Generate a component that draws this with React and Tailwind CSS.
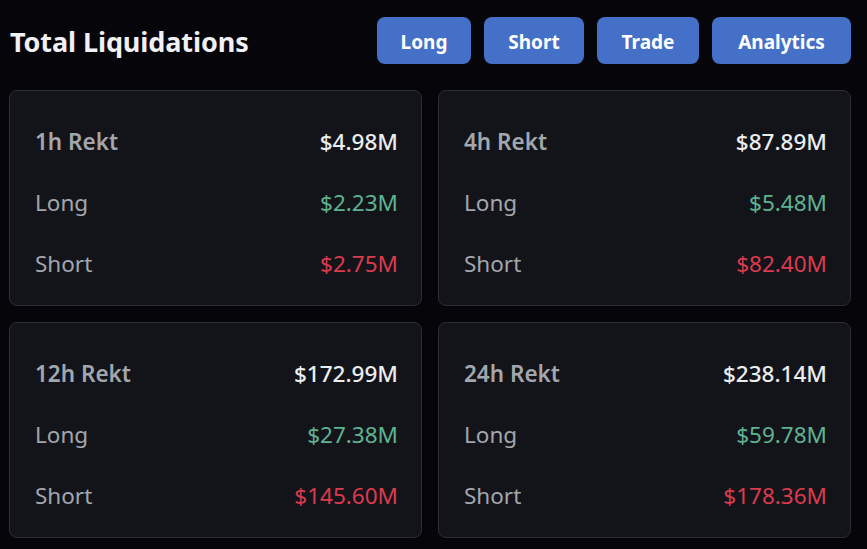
import React from "react";

const cards = [
  { label: "1h Rekt", total: "$4.98M", long: "$2.23M", short: "$2.75M" },
  { label: "4h Rekt", total: "$87.89M", long: "$5.48M", short: "$82.40M" },
  { label: "12h Rekt", total: "$172.99M", long: "$27.38M", short: "$145.60M" },
  { label: "24h Rekt", total: "$238.14M", long: "$59.78M", short: "$178.36M" },
];

const buttons = [
  { t: "Long", w: "w-[94px]" },
  { t: "Short", w: "w-[100px]" },
  { t: "Trade", w: "w-[102px]" },
  { t: "Analytics", w: "w-[139px]" },
];

function Row({ label, value, labelCls, valueCls }) {
  return (
    <div className="flex h-[61px] items-center justify-between">
      <span className={labelCls}>{label}</span>
      <span className={valueCls}>{value}</span>
    </div>
  );
}

export default function App() {
  return (
    <div
      className="min-h-[549px] w-[867px] bg-[#05050a] pl-[9px] pr-[16px]"
      style={{ fontFamily: '"Noto Sans", "Open Sans", sans-serif' }}
    >
      <div className="flex h-[90px] items-center justify-between pb-[9px]">
        <h1 className="pl-[1px] pt-[3px] text-[27px] font-bold tracking-[-0.1px] text-[#f0f0f5]">
          Total Liquidations
        </h1>
        <div className="flex gap-[13px]">
          {buttons.map((b) => (
            <button
              key={b.t}
              className={`${b.w} h-[47px] rounded-[8px] bg-[#4470c8] pt-[3px] text-[19px] font-bold text-white`}
            >
              {b.t}
            </button>
          ))}
        </div>
      </div>
      <div className="grid grid-cols-2 gap-x-[16px] gap-y-[16px]">
        {cards.map((c) => (
          <div
            key={c.label}
            className="h-[216px] rounded-[8px] border border-[#2e2f35] bg-[#131419] pl-[25px] pr-[23px] pt-[20px] text-[22.5px]"
          >
            <Row
              label={c.label}
              value={c.total}
              labelCls="font-semibold text-[#a2a6ad]"
              valueCls="font-medium text-[#ecedf0]"
            />
            <Row
              label="Long"
              value={c.long}
              labelCls="text-[#a2a6ad]"
              valueCls="text-[#5db391]"
            />
            <Row
              label="Short"
              value={c.short}
              labelCls="text-[#a2a6ad]"
              valueCls="text-[#dc3a4e]"
            />
          </div>
        ))}
      </div>
    </div>
  );
}
